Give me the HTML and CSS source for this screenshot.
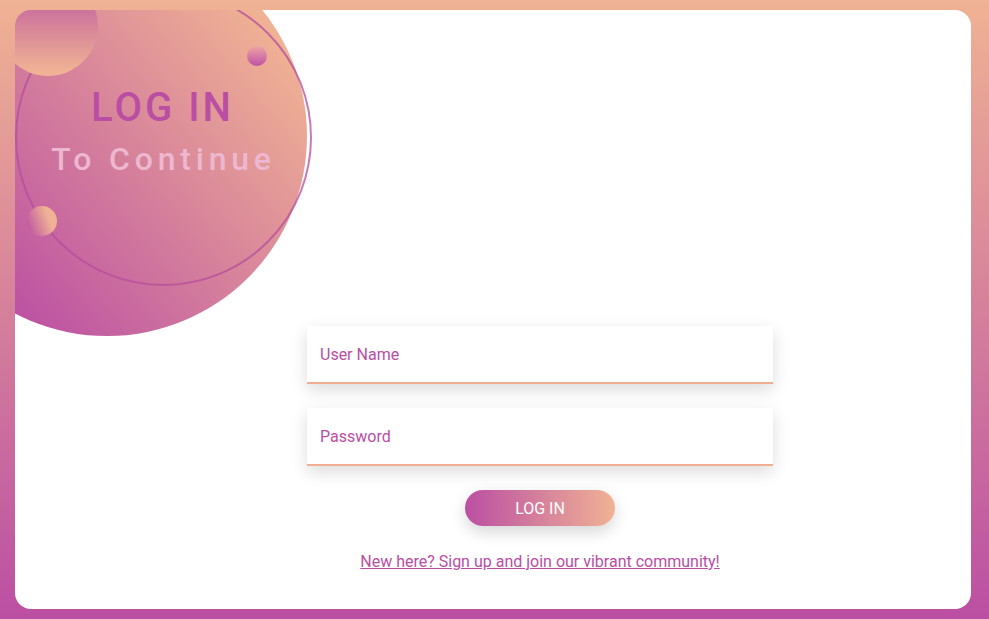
FILE: index.html
```html
<!DOCTYPE html>
<html lang="en">
<head>
<meta charset="utf-8">
<title>Log In</title>
<link rel="stylesheet" href="styles.css">
</head>
<body>
<main class="card">
  <div class="blob"></div>
  <div class="ring"></div>
  <div class="dot dot-corner"></div>
  <div class="dot dot-small"></div>
  <div class="dot dot-side"></div>

  <header class="hero">
    <h1 class="hero-title">LOG IN</h1>
    <p class="hero-sub">To Continue</p>
  </header>

  <form class="form">
    <input class="field" type="text" placeholder="User Name">
    <input class="field" type="password" placeholder="Password">
    <button class="btn" type="button">LOG IN</button>
    <a class="signup" href="#">New here? Sign up and join our vibrant community!</a>
  </form>
</main>
</body>
</html>
```

FILE: styles.css
```css
* { box-sizing: border-box; }

html, body {
  margin: 0;
  height: 100%;
}

body {
  font-family: Roboto, "Liberation Sans", sans-serif;
  background: linear-gradient(to bottom, #f0b294 0%, #bb4fa3 100%);
  padding: 10px 18px 10px 15px;
  height: 619px;
  overflow: hidden;
}

.card {
  position: relative;
  height: 599px;
  background: #fff;
  border-radius: 16px;
  overflow: hidden;
  padding-top: 78px;
}

.blob {
  position: absolute;
  left: -108px;
  top: -74px;
  width: 400px;
  height: 400px;
  border-radius: 50%;
  background: linear-gradient(50deg, #bb4fa3 15%, #f0b294 85%);
}

.ring {
  position: absolute;
  left: 0;
  top: -21px;
  width: 297px;
  height: 297px;
  border-radius: 50%;
  border: 2px solid rgba(180, 78, 158, 0.75);
}

.dot {
  position: absolute;
  border-radius: 50%;
}

.dot-corner {
  left: -17px;
  top: -34px;
  width: 100px;
  height: 100px;
  background: linear-gradient(to bottom, #bf5aa0 10%, #f0b294 95%);
}

.dot-small {
  left: 232px;
  top: 36px;
  width: 20px;
  height: 20px;
  background: linear-gradient(to bottom, #eea3a4, #bf52a5);
}

.dot-side {
  left: 12px;
  top: 196px;
  width: 30px;
  height: 30px;
  background: linear-gradient(70deg, #bd53a3 5%, #f0b294 70%);
}

.hero {
  position: relative;
  width: 292px;
  text-align: center;
}

.hero-title {
  margin: 0;
  font-size: 40px;
  line-height: 40px;
  font-weight: 500;
  letter-spacing: 3px;
  color: #b94ea3;
  padding-left: 3px;
}

.hero-sub {
  margin: 15px 0 0;
  font-size: 32px;
  line-height: 32px;
  font-weight: 500;
  letter-spacing: 4.8px;
  color: #edb7cf;
  padding-left: 5px;
}

.form {
  position: relative;
  width: 466px;
  margin: 151px 0 0 292px;
  display: flex;
  flex-direction: column;
  align-items: center;
}

.field {
  display: block;
  width: 100%;
  height: 58px;
  border: none;
  border-bottom: 2px solid #f0ae93;
  background: #fff;
  padding: 0 13px;
  font-family: inherit;
  font-size: 16px;
  color: #b94ea3;
  box-shadow: 0 6px 16px rgba(0, 0, 0, 0.14);
  outline: none;
}

.field + .field {
  margin-top: 24px;
}

.field::placeholder {
  color: #b94ea3;
  opacity: 1;
}

.btn {
  margin-top: 24px;
  width: 150px;
  height: 36px;
  border: none;
  border-radius: 18px;
  background: linear-gradient(to right, #bb4fa3, #f0b294);
  color: #fff;
  font-family: inherit;
  font-size: 16px;
  box-shadow: 0 6px 16px rgba(0, 0, 0, 0.16);
}

.signup {
  margin-top: 26px;
  font-size: 16px;
  line-height: 19px;
  color: #b94ea3;
  text-decoration: underline;
}
```
